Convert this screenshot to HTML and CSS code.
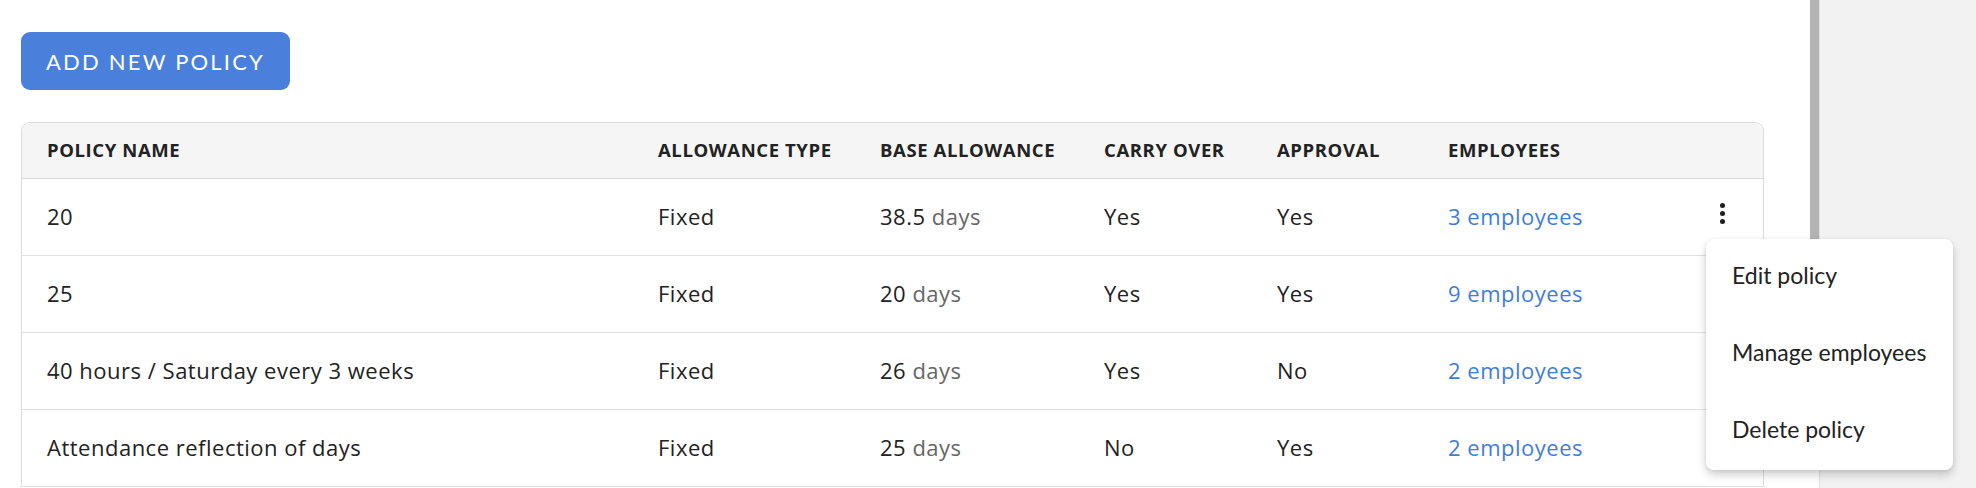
FILE: index.html
```html
<!DOCTYPE html>
<html lang="en">
<head>
<meta charset="utf-8">
<title>Policies</title>
<link rel="stylesheet" href="styles.css">
</head>
<body>
<div class="page">
  <main class="main">
    <button class="btn-primary" type="button">ADD NEW POLICY</button>
    <div class="table">
      <div class="row head">
        <div class="cell">POLICY NAME</div>
        <div class="cell">ALLOWANCE TYPE</div>
        <div class="cell">BASE ALLOWANCE</div>
        <div class="cell">CARRY OVER</div>
        <div class="cell">APPROVAL</div>
        <div class="cell">EMPLOYEES</div>
        <div class="cell"></div>
      </div>
      <div class="row">
        <div class="cell">20</div>
        <div class="cell">Fixed</div>
        <div class="cell">38.5 <span class="unit">days</span></div>
        <div class="cell">Yes</div>
        <div class="cell">Yes</div>
        <div class="cell"><a class="link" href="#">3 employees</a></div>
        <div class="cell actions">
          <span class="kebab"><i></i><i></i><i></i></span>
          <div class="menu">
            <div class="menu-item">Edit policy</div>
            <div class="menu-item">Manage employees</div>
            <div class="menu-item">Delete policy</div>
          </div>
        </div>
      </div>
      <div class="row">
        <div class="cell">25</div>
        <div class="cell">Fixed</div>
        <div class="cell">20 <span class="unit">days</span></div>
        <div class="cell">Yes</div>
        <div class="cell">Yes</div>
        <div class="cell"><a class="link" href="#">9 employees</a></div>
        <div class="cell actions"></div>
      </div>
      <div class="row">
        <div class="cell">40 hours / Saturday every 3 weeks</div>
        <div class="cell">Fixed</div>
        <div class="cell">26 <span class="unit">days</span></div>
        <div class="cell">Yes</div>
        <div class="cell">No</div>
        <div class="cell"><a class="link" href="#">2 employees</a></div>
        <div class="cell actions"></div>
      </div>
      <div class="row">
        <div class="cell">Attendance reflection of days</div>
        <div class="cell">Fixed</div>
        <div class="cell">25 <span class="unit">days</span></div>
        <div class="cell">No</div>
        <div class="cell">Yes</div>
        <div class="cell"><a class="link" href="#">2 employees</a></div>
        <div class="cell actions"></div>
      </div>
    </div>
  </main>
  <div class="scrollbar"><div class="thumb"></div></div>
  <aside class="side"></aside>
</div>
</body>
</html>
```

FILE: styles.css
```css
html, body {
  margin: 0;
  padding: 0;
  height: 100%;
  overflow: hidden;
}
body {
  font-family: "Open Sans", "Noto Sans", sans-serif;
  color: #222222;
  background: #ffffff;
}
.page {
  display: flex;
  height: 488px;
}
.main {
  width: 1810px;
  flex: none;
  padding: 32px 0 0 21px;
  box-sizing: border-box;
}
.btn-primary {
  display: block;
  width: 269px;
  height: 58px;
  border: none;
  border-radius: 9px;
  background: #4a80dc;
  color: #ffffff;
  font-family: Lato, "Noto Sans", sans-serif;
  font-size: 22px;
  letter-spacing: 2.2px;
  padding: 0;
  cursor: pointer;
}
.table {
  margin-top: 32px;
  width: 1741px;
  border: 1px solid #dcdcdc;
  border-bottom: none;
  border-radius: 9px 9px 0 0;
}
.row {
  display: grid;
  grid-template-columns: 611px 222px 224px 173px 171px 1fr 80px;
  height: 76px;
  border-bottom: 1px solid #e0e0e0;
  align-items: center;
  font-size: 22px;
  letter-spacing: 0.5px;
}
.row.head {
  height: 55px;
  background: #f5f5f5;
  border-radius: 9px 9px 0 0;
  font-size: 18.5px;
  font-weight: 700;
  letter-spacing: 0.6px;
  color: #222222;
  border-bottom: 1px solid #d8d8d8;
}
.cell {
  white-space: nowrap;
  padding-left: 25px;
  margin-top: -3px;
}
.unit {
  color: #666666;
}
.link {
  color: #3f7ddb;
  text-decoration: none;
}
.actions {
  position: relative;
  height: 100%;
  padding-left: 0;
  margin-top: 0;
  display: flex;
  align-items: center;
  justify-content: center;
}
.kebab {
  display: flex;
  flex-direction: column;
  gap: 3px;
  margin-top: -8px;
  margin-right: 2px;
}
.kebab i {
  display: block;
  width: 5px;
  height: 5px;
  border-radius: 50%;
  background: #1e1e1e;
}
.menu {
  position: absolute;
  left: 23px;
  top: 60px;
  width: 247px;
  background: #ffffff;
  border-radius: 8px;
  box-shadow: 0 5px 10px rgba(0,0,0,0.18), 0 1px 4px rgba(0,0,0,0.08);
  z-index: 5;
  display: flex;
  flex-direction: column;
}
.menu-item {
  height: 72px;
  padding-bottom: 5px;
  display: flex;
  align-items: center;
  padding-left: 26px;
  font-family: Lato, "Noto Sans", sans-serif;
  font-size: 23px;
  letter-spacing: 0;
  color: #222222;
}
.scrollbar {
  width: 9px;
  flex: none;
  background: #ffffff;
}
.thumb {
  height: 240px;
  background: #b3b3b3;
}
.side {
  flex: 1;
  background: #f2f2f2;
  border-left: 1px solid #e0e0e0;
}
```
